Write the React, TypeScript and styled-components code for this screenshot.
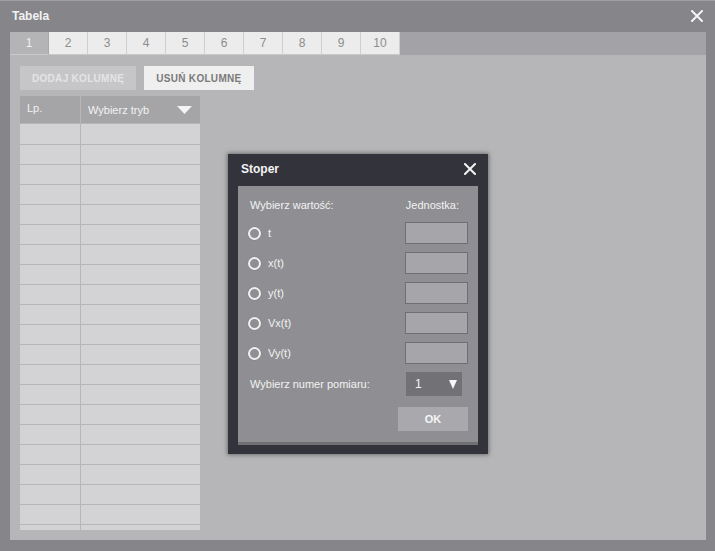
import React from "react";
import styled, { createGlobalStyle } from "styled-components";

const Global = createGlobalStyle`
  html, body { margin: 0; padding: 0; background: #86858a; }
  body { font-family: "Liberation Sans", Arial, sans-serif; }
  * { box-sizing: border-box; }
`;

const Window = styled.div`
  position: relative;
  width: 715px;
  height: 551px;
  display: flex;
  flex-direction: column;
  padding: 0 9px 11px 10px;
  background: #86858a;
  border-top: 1px solid #a09fa4;
  overflow: hidden;
`;

const TitleBar = styled.div`
  height: 31px;
  display: flex;
  align-items: center;
  justify-content: space-between;
  padding: 0 3px 1px 2px;
`;

const Title = styled.span`
  color: #f2f2f2;
  font-size: 12px;
  font-weight: bold;
`;

const CloseIcon = ({ size = 12 }: { size?: number }) => (
  <svg width={size} height={size} viewBox="0 0 12 12">
    <path d="M1 1 L11 11 M11 1 L1 11" stroke="#f4f4f4" strokeWidth="2" strokeLinecap="square" />
  </svg>
);

const Content = styled.div`
  flex: 1;
  display: flex;
  flex-direction: column;
  background: #b6b6b8;
  min-height: 0;
`;

const TabBar = styled.div`
  height: 23px;
  display: flex;
  background: #a3a2a6;
`;

const Tab = styled.div<{ $active?: boolean }>`
  width: 39px;
  height: 23px;
  display: flex;
  align-items: center;
  justify-content: center;
  font-size: 12px;
  color: ${(p) => (p.$active ? "#eeeeee" : "#8c8c8c")};
  background: ${(p) => (p.$active ? "#b4b4b6" : "#ececec")};
  border-right: 1px solid ${(p) => (p.$active ? "#a9a9ab" : "#cfcfd1")};
  border-bottom: 1px solid #c9c9cb;
`;

const Body = styled.div`
  flex: 1;
  display: flex;
  flex-direction: column;
  gap: 6px;
  padding: 11px 10px 10px;
  min-height: 0;
`;

const Toolbar = styled.div`
  display: flex;
  gap: 8px;
`;

const ToolButton = styled.div<{ $disabled?: boolean }>`
  height: 24px;
  padding: 0 12px;
  display: flex;
  align-items: center;
  font-size: 10px;
  font-weight: bold;
  letter-spacing: 0.3px;
  color: ${(p) => (p.$disabled ? "#e4e4e6" : "#7a7a7a")};
  background: ${(p) => (p.$disabled ? "#c6c6c8" : "#efefef")};
`;

const Table = styled.div`
  width: 180px;
  flex: 1;
  min-height: 0;
  overflow: hidden;
  display: grid;
  grid-template-columns: 60px 119px;
  grid-template-rows: 27px 20px;
  grid-auto-rows: 19px;
  gap: 1px;
  align-content: start;
  background: #b6b6b8;
`;

const HeadCell = styled.div<{ $top?: boolean }>`
  background: #a5a5a7;
  color: #f2f2f2;
  font-size: 11px;
  display: flex;
  align-items: ${(p) => (p.$top ? "flex-start" : "center")};
  justify-content: space-between;
  padding: ${(p) => (p.$top ? "6px 7px 0" : "1px 8px 0 7px")};
`;

const Cell = styled.div`
  background: #d3d3d5;
`;

const HeadArrow = () => (
  <svg width="15" height="8" viewBox="0 0 15 8">
    <path d="M0 0 L15 0 L7.5 8 Z" fill="#f4f4f4" />
  </svg>
);

const Dialog = styled.div`
  position: absolute;
  left: 228px;
  top: 153px;
  width: 260px;
  height: 300px;
  background: #33333b;
  box-shadow: 0 0 4px 1px rgba(60, 60, 60, 0.55);
  display: flex;
  flex-direction: column;
  padding: 0 10px 9px;
`;

const DialogHeader = styled.div`
  height: 32px;
  display: flex;
  align-items: center;
  justify-content: space-between;
  padding: 0 2px 3px 3px;
  color: #f4f4f4;
  font-size: 12px;
  font-weight: bold;
`;

const Panel = styled.div`
  flex: 1;
  background: #8f8f93;
  border-bottom: 3px solid #707075;
  padding: 10px 10px 0;
  display: grid;
  grid-template-columns: 1fr 63px;
  grid-template-rows: 18px repeat(5, 22px) 24px 27px;
  row-gap: 8px;
  color: #f2f2f2;
  font-size: 11px;
`;

const Label = styled.div<{ $right?: boolean }>`
  display: flex;
  align-items: center;
  justify-content: ${(p) => (p.$right ? "flex-end" : "flex-start")};
  padding-right: ${(p) => (p.$right ? "9px" : "0")};
  padding-left: ${(p) => (p.$right ? "0" : "2px")};
`;

const RadioRow = styled.div`
  display: flex;
  align-items: center;
  gap: 7px;
  font-size: 11px;
`;

const Radio = styled.span`
  width: 13px;
  height: 13px;
  border-radius: 50%;
  border: 2px solid #f0f0f0;
  box-shadow: 0 0 1px rgba(0, 0, 0, 0.4);
`;

const UnitBox = styled.div`
  background: #a6a6aa;
  border: 1px solid #6f6f73;
`;

const SelectBox = styled.div`
  width: 56px;
  margin-left: 1px;
  background: #727276;
  display: flex;
  align-items: center;
  justify-content: space-between;
  padding: 0 5px 0 9px;
  font-size: 12px;
`;

const SelectArrow = () => (
  <svg width="8" height="9" viewBox="0 0 8 9">
    <path d="M0 0 L8 0 L4 9 Z" fill="#f6f6f6" />
  </svg>
);

const OkRow = styled.div`
  grid-column: 1 / 3;
  display: flex;
  justify-content: flex-end;
  padding-top: 3px;
`;

const OkButton = styled.div`
  width: 70px;
  background: #a9a9ad;
  color: #f6f6f6;
  font-weight: bold;
  font-size: 11px;
  display: flex;
  align-items: center;
  justify-content: center;
`;

const tabs = ["1", "2", "3", "4", "5", "6", "7", "8", "9", "10"];
const options = ["t", "x(t)", "y(t)", "Vx(t)", "Vy(t)"];

export default function App() {
  const rows = Array.from({ length: 22 });
  return (
    <>
      <Global />
      <Window>
        <TitleBar>
          <Title>Tabela</Title>
          <CloseIcon />
        </TitleBar>
        <Content>
          <TabBar>
            {tabs.map((t, i) => (
              <Tab key={t} $active={i === 0}>
                {t}
              </Tab>
            ))}
          </TabBar>
          <Body>
            <Toolbar>
              <ToolButton $disabled>DODAJ KOLUMNĘ</ToolButton>
              <ToolButton>USUŃ KOLUMNĘ</ToolButton>
            </Toolbar>
            <Table>
              <HeadCell $top>Lp.</HeadCell>
              <HeadCell>
                <span>Wybierz tryb</span>
                <HeadArrow />
              </HeadCell>
              {rows.map((_, i) => (
                <React.Fragment key={i}>
                  <Cell />
                  <Cell />
                </React.Fragment>
              ))}
            </Table>
          </Body>
        </Content>

        <Dialog>
          <DialogHeader>
            <span>Stoper</span>
            <CloseIcon />
          </DialogHeader>
          <Panel>
            <Label>Wybierz wartość:</Label>
            <Label $right>Jednostka:</Label>
            {options.map((o) => (
              <React.Fragment key={o}>
                <RadioRow>
                  <Radio />
                  <span>{o}</span>
                </RadioRow>
                <UnitBox />
              </React.Fragment>
            ))}
            <Label>Wybierz numer pomiaru:</Label>
            <SelectBox>
              <span>1</span>
              <SelectArrow />
            </SelectBox>
            <OkRow>
              <OkButton>OK</OkButton>
            </OkRow>
          </Panel>
        </Dialog>
      </Window>
    </>
  );
}
